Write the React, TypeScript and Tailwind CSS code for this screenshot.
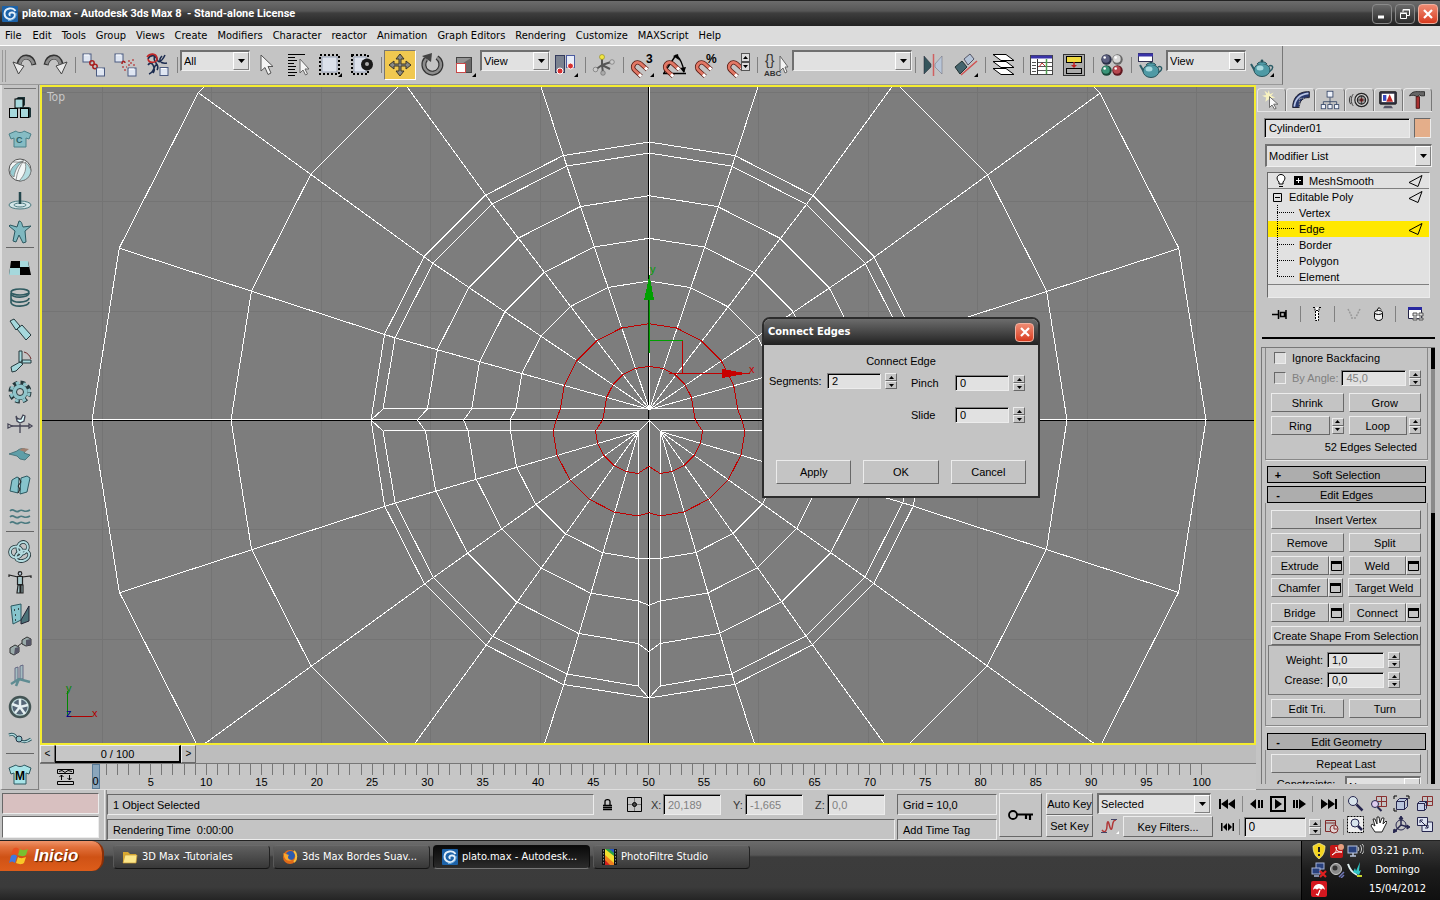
import React from "react";

const PANEL = "[font-family:'Liberation_Sans',Arial,sans-serif]";
const UI = "[font-family:'DejaVu_Sans_Condensed','DejaVu_Sans',Tahoma,sans-serif]";
const TITLE = "[font-family:Roboto,'DejaVu_Sans_Condensed',Tahoma,sans-serif]";
const RAISED =
  "border border-t-[#ececec] border-l-[#ececec] border-b-[#686868] border-r-[#686868]";
const SUNKEN =
  "border border-t-[#686868] border-l-[#686868] border-b-[#ececec] border-r-[#ececec]";
const FIELD =
  "border border-t-[#808080] border-l-[#808080] border-b-[#ececec] border-r-[#ececec] shadow-[inset_1px_1px_0_#000] bg-[#e1e1e1] pl-1 outline-none";

type Kids = { children?: React.ReactNode };

function Ic({ children, s = 24 }: Kids & { s?: number }) {
  return (
    <svg width={s} height={s} viewBox="0 0 24 24" fill="none" aria-hidden="true" className="shrink-0 overflow-visible">
      {children}
    </svg>
  );
}

function Combo({ label, value, cls }: { label: string; value: string; cls: string }) {
  return (
    <div
      className={`relative shrink-0 border-t-2 border-l-2 border-t-[#707070] border-l-[#707070] border-b border-r border-b-[#f0f0f0] border-r-[#f0f0f0] bg-[#e1e1e1] ${cls}`}
    >
      <select aria-label={label} className="block h-full w-full appearance-none bg-transparent pl-0.5 text-[11px] outline-none">
        <option>{value}</option>
      </select>
      <span className="pointer-events-none absolute top-0 right-0 bottom-0 flex w-4 items-center justify-center border border-t-white border-l-white border-b-[#808080] border-r-[#808080] bg-[#dcdcdc]">
        <svg width="7" height="4" viewBox="0 0 7 4"><path d="M0 0h7L3.5 4z" fill="#000" /></svg>
      </span>
    </div>
  );
}

function Spinner({ name }: { name: string }) {
  return (
    <span className="flex h-4 w-3 shrink-0 flex-col">
      <button aria-label={`${name} up`} className={`flex h-2 items-center justify-center ${RAISED}`}>
        <svg width="5" height="3" viewBox="0 0 5 3"><path d="M0 3h5L2.5 0z" fill="#000" /></svg>
      </button>
      <button aria-label={`${name} down`} className={`flex h-2 items-center justify-center ${RAISED}`}>
        <svg width="5" height="3" viewBox="0 0 5 3"><path d="M0 0h5L2.5 3z" fill="#000" /></svg>
      </button>
    </span>
  );
}

function Push({ children, cls = "" }: Kids & { cls?: string }) {
  return (
    <button className={`flex items-center justify-center whitespace-nowrap ${RAISED} ${cls}`}>{children}</button>
  );
}

/* ---------- main toolbar ---------- */

const Cube = ({ x, y, s = 8 }: { x: number; y: number; s?: number }) => (
  <g>
    <rect x={x} y={y} width={s} height={s} fill="#dfe6f2" stroke="#4a5a80" />
    <path d={`M${x + 1} ${y + 1}h${s - 3}`} stroke="#fff" />
  </g>
);
const Corner = () => <path d="M24 20v4h-4z" fill="#000" />;
const Magnet = () => (
  <g transform="rotate(-48 8 15)">
    <path d="M4 23V14a4.500 4.500 0 0 1 9 0v9" stroke="#5a1c14" strokeWidth="4.400" />
    <path d="M4 22V14a4.500 4.500 0 0 1 9 0v8" stroke="#e27866" strokeWidth="2.800" />
    <path d="M4 23v-3M13 23v-3" stroke="#fff" strokeWidth="3" />
  </g>
);
const Pointer = () => (
  <path d="M7 2v16l4-3.500 3 7 3-1.500-3-6.500h5z" fill="#f4f4f4" stroke="#555" />
);
const Teapot = ({ y = 0 }: { y?: number }) => (
  <g transform={`translate(0 ${y})`}>
    <path d="M5 17L1 10" stroke="#2b5c66" strokeWidth="2" />
    <path d="M19 12c5-2 5 4-1 6" stroke="#2b5c66" strokeWidth="1.500" />
    <ellipse cx="12" cy="16" rx="8" ry="6.500" fill="#4f9aa5" stroke="#27525a" />
    <ellipse cx="10" cy="14" rx="3.500" ry="2.500" fill="#a8d8dd" />
    <path d="M7 10c2-3 8-3 10 0" fill="#4f9aa5" stroke="#27525a" />
    <circle cx="12" cy="7" r="1.400" fill="#27525a" />
  </g>
);
const Ball = ({ x, y, c, d }: { x: number; y: number; c: string; d: string }) => (
  <g>
    <circle cx={x} cy={y} r="5.200" fill={d} />
    <circle cx={x - 0.6} cy={y - 0.6} r="3.800" fill={c} />
    <circle cx={x - 1.8} cy={y - 2} r="1.300" fill="#fff" />
  </g>
);

const T: Record<string, React.ReactNode> = {
  Undo: (<><path d="M22 12C20 2 9 1 7 11" stroke="#333" strokeWidth="5" /><path d="M21.500 11C19 3 10 2 7.500 11" stroke="#8d8d8d" strokeWidth="3" /><path d="M1 9l11 4-5.500 8z" fill="#e8e8e8" stroke="#444" /></>),
  Redo: (<><path d="M2 12C4 2 15 1 17 11" stroke="#333" strokeWidth="5" /><path d="M2.500 11C5 3 14 2 16.500 11" stroke="#8d8d8d" strokeWidth="3" /><path d="M23 9l-11 4 5.500 8z" fill="#e8e8e8" stroke="#444" /></>),
  Link: (<><Cube x={1} y={1} /><circle cx="10" cy="10" r="2.200" stroke="#a82020" strokeWidth="1.500" /><circle cx="13" cy="13.500" r="2.200" stroke="#a82020" strokeWidth="1.500" /><Cube x={14.5} y={15} /></>),
  Unlink: (<><Cube x={1} y={1} /><path d="M8 11c0-4 3-3 3-1" stroke="#a82020" strokeWidth="1.500" /><path d="M14 8h2M18 7h2M16 10h2M8 14h2M10 17h2M12 14h1M14 12h2M19 12h2" stroke="#b85050" strokeWidth="1.300" /><Cube x={14} y={15} /></>),
  Bind: (<><path d="M2 6c2-5 8-4 9 0s4 4 8-4M2 12c4-6 8 4 5 8M9 3c-4 6 6 8 2 14M16 3c-4 4-2 8 5 7M3 21c6-2 4-8 8-10" stroke="#1c2c50" strokeWidth="1.600" /><path d="M1 4c3-4 9-4 10 1s-8 6-9 1" stroke="#c02828" strokeWidth="1.600" /><Cube x={14} y={14.5} /></>),
  Select: <Pointer />,
  "Select by Name": (<><path d="M2 1.500h17M2 4.500h7M2 7.500h9M2 10.500h6M2 13.500h8M2 16.500h7M2 19.500h9M2 22.500h7" stroke="#000" /><path d="M14 6v14l3-3 2.500 5 2-1-2.500-5h4z" fill="#f4f4f4" stroke="#666" /></>),
  Region: (<><rect x="2" y="2" width="19" height="19" stroke="#000" strokeWidth="2" strokeDasharray="2 2" /><rect x="4" y="4" width="15" height="15" fill="#dbe0ea" stroke="#9aa3b8" /><Corner /></>),
  Crossing: (<><rect x="2" y="2" width="16" height="19" stroke="#000" strokeWidth="2" strokeDasharray="2 2" /><rect x="4" y="4" width="12" height="15" fill="#dbe0ea" stroke="#9aa3b8" /><circle cx="17" cy="11.500" r="6" fill="#1a1a1a" /><circle cx="17" cy="11" r="2" fill="#aaa" /></>),
  Move: (<path d="M12 1l4 5h-3v5h5V8l5 4-5 4v-3h-5v5h3l-4 5-4-5h3v-5H6v3l-5-4 5-4v3h5V6H8z" fill="#8a8a86" stroke="#3a3426" />),
  Rotate: (<><path d="M17 4.500A8.500 8.500 0 1 1 6 6" stroke="#333" strokeWidth="5" /><path d="M17 4.500A8.500 8.500 0 1 1 6 6" stroke="#8d8d8d" strokeWidth="2.600" /><path d="M2 3l10-3-1 9z" fill="#444" /></>),
  Scale: (<><rect x="4.500" y="4.500" width="15" height="15" fill="#6a6a6a" stroke="#444" /><path d="M5 5h14L5 14z" fill="#949494" /><rect x="4.500" y="10.500" width="9" height="9" fill="#fff" stroke="#c84848" /><Corner /></>),
  Pivot: (<><rect x="1.500" y="2.500" width="9" height="17" fill="#7b8290" stroke="#333a5c" /><rect x="12.500" y="2.500" width="8" height="12" fill="#e8edf8" stroke="#4a5aa0" /><circle cx="6" cy="18" r="3" fill="#d83030" stroke="#fff" /><circle cx="16.500" cy="13" r="3" fill="#d83030" stroke="#fff" /><Corner /></>),
  Manipulate: (<><path d="M10 12V4M10 12L3 17M10 12l9-3M10 12l1 8M10 12l8 4" stroke="#555" strokeWidth="2" /><circle cx="10" cy="4" r="2.500" fill="#f2e640" stroke="#8a8420" strokeWidth=".6" /><circle cx="3.500" cy="16.500" r="2.300" fill="#ccc" stroke="#666" strokeWidth=".6" /><circle cx="20" cy="9" r="2.300" fill="#ccc" stroke="#666" strokeWidth=".6" /><circle cx="11" cy="20" r="2.300" fill="#aaa" stroke="#666" strokeWidth=".6" /></>),
  "Snap 3": (<><Magnet /><text x="16" y="10" fontSize="12" fontWeight="700" fill="#000">3</text><Corner /></>),
  "Angle Snap": (<><path d="M1 20.500h23M2 20L14 2M14 2c5 4 7 10 8 17" stroke="#000" strokeWidth="1.400" /><path d="M11 3l5-2 1 6z" fill="#000" /><path d="M18 15l6-1-2 6z" fill="#000" /><Magnet /></>),
  "Percent Snap": (<><Magnet /><text x="12" y="10" fontSize="12" fontWeight="700" fill="#000">%</text></>),
  "Spinner Snap": (<><Magnet /><rect x="15.500" y=".5" width="8" height="8" fill="#ddd" stroke="#555" /><rect x="15.500" y="9.500" width="8" height="8" fill="#ddd" stroke="#555" /><path d="M17 6h5l-2.500-3zM17 12h5l-2.500 3z" fill="#000" /></>),
  "Named Sets": (<><text x="1" y="12" fontSize="14" fill="#333">{"{}"}</text><text x="0" y="23" fontSize="8" fontWeight="700" fill="#333">ABC</text><path d="M16 3v15l3-3 2 5 2-1-2-5h3z" fill="#f4f4f4" stroke="#666" /></>),
  Mirror: (<><path d="M2 3l7 8v3L2 21z" fill="#35555c" stroke="#223" strokeWidth=".5" /><path d="M20 3l-7 8v3l7 7z" fill="#b9c6d8" stroke="#667" strokeWidth=".5" /><path d="M11.500 1v22" stroke="#d06060" strokeWidth="1.500" /></>),
  Align: (<><path d="M1 14l7-6 5 6-7 7z" fill="#45656e" stroke="#233" /><path d="M10 6l6-5 4 5-6 6z" fill="#b5c4d8" stroke="#556" /><path d="M7 22L23 8" stroke="#d05050" strokeWidth="1.500" /><Corner /></>),
  Layers: (<><path d="M1 15.500h13l8 6H9zM1 8.500h13l8 6H9zM1 1.500h13l8 6H9z" fill="#fff" stroke="#000" /></>),
  "Curve Editor": (<><rect x=".5" y="2.500" width="22" height="19" fill="#fff" stroke="#444" /><path d="M1 4h21" stroke="#3a34a8" strokeWidth="3" /><path d="M2 9.500h4M2 12.500h4M2 15.500h4M2 18.500h4M8 9.500h14M8 13.500h14M8 17.500h14" stroke="#555" /><path d="M7.500 6v15" stroke="#333" /><path d="M9 14l3-4 3 3" stroke="#c03030" /><path d="M16.500 6v15" stroke="#50a050" strokeWidth="1.500" /></>),
  Schematic: (<><rect x="1.500" y="1.500" width="21" height="21" fill="#aaa" stroke="#333" /><rect x="4.500" y="3.500" width="15" height="6" fill="#f0da40" stroke="#000" /><rect x="4.500" y="15.500" width="15" height="5" fill="#aaa" stroke="#000" /><path d="M12 9v3" stroke="#c02020" strokeWidth="1.500" /><path d="M9 12h6l-3 3z" fill="#c02020" /></>),
  Materials: (<><Ball x={6.5} y={6.5} c="#5c6080" d="#2c3048" /><Ball x={17.5} y={6.5} c="#d8d8d8" d="#666" /><Ball x={6.5} y={17.5} c="#3a9478" d="#184838" /><Ball x={17.5} y={17.5} c="#b84850" d="#601820" /></>),
  "Render Scene": (<><g transform="translate(1 2)"><Teapot /></g><rect x=".5" y=".5" width="14" height="8" fill="#fff" stroke="#335" /><path d="M0 2h15" stroke="#3a34a8" strokeWidth="3" /></>),
  "Quick Render": (<><Teapot y={1} /><Corner /></>),
};

function Tool({ name, on = false }: { name: string; on?: boolean }) {
  return (
    <button
      aria-label={name}
      className={`flex h-[30px] w-8 shrink-0 items-center justify-center ${
        on ? "border border-t-[#777] border-l-[#777] border-b-white border-r-white bg-[#f0c850]" : ""
      }`}
    >
      <Ic>{T[name]}</Ic>
    </button>
  );
}
const Sep = () => (
  <span className="flex h-[30px] w-1.5 shrink-0 items-center justify-center">
    <span className="h-4 w-px bg-[#808080]" />
  </span>
);

/* ---------- reactor toolbar ---------- */

const R1 = "#a6d8dc";
const R2 = "#24383c";
const REACTOR: [string, React.ReactNode][][] = [
  [
    ["Rigid Bodies", <><path d="M7 4l3-3h7v8l-3 3H7z" fill="#1c3438" /><rect x="7" y="3" width="8" height="9" fill={R1} stroke="#000" /><path d="M12 20V11h9l2 1v9l-2 1z" fill="#1c3438" /><rect x="1.500" y="12.500" width="8" height="9" fill={R1} stroke="#000" /><rect x="12.500" y="12.500" width="8" height="9" fill={R1} stroke="#000" /></>],
    ["Cloth", <><path d="M8 4L1 7l2 5 3-1v9h12v-9l3 1 2-5-7-3c-2 2-6 2-8 0z" fill="#86bcc4" stroke="#4a8088" /><text x="8" y="16" fontSize="9" fontWeight="700" fill="#2c6068">C</text></>],
    ["Soft Body", <><circle cx="12" cy="12" r="11" fill="#f2f6f6" stroke="#555" /><path d="M2 15C3 9 9 4 15 3c-5 4-8 9-9 16-2-1-3-2-4-4z" fill="#98ccd2" stroke="#777" strokeWidth=".8" /><path d="M17 4c2 6 0 13-6 19 7 0 11-4 12-10-1-4-3-7-6-9z" fill="#b4dce0" stroke="#777" strokeWidth=".8" /><path d="M5 4c4 0 8 0 12 1M16 2c-4 6-7 12-8 20" stroke="#777" strokeWidth=".8" /></>],
    ["Rope", <><ellipse cx="12" cy="16" rx="11" ry="4" fill="#d4e6e8" stroke="#4b7a80" /><ellipse cx="12" cy="16" rx="6" ry="2" stroke="#4b7a80" /><path d="M12 3v12" stroke="#23464c" strokeWidth="2.500" /></>],
    ["Deforming Mesh", <path d="M11 1c3 0 3 4 4 6l8-1-6 5 1 11-3 1-4-8-3 7-3-1 2-10-6-5 1-1 7 2z" fill="#7fb8c0" stroke="#2c5860" />],
  ],
  [
    ["Plane", <><path d="M3 5h17l3 14H1z" fill="#000" /><path d="M12 5h8l1 6h-9zM2 12h10v7H1z" fill={R1} /></>],
    ["Spring", <g stroke="#2f5a60" strokeWidth="1.600"><ellipse cx="12" cy="5" rx="9" ry="3" /><path d="M3 6c0 6 18 5 18 0M3 11c0 6 18 5 18 0M3 15c0 6 18 5 18 0M3 7v9" /></g>],
    ["Linear Dashpot", <g stroke={R2}><path d="M2 3l4-2 6 7-4 4z" fill={R1} /><path d="M9 11l5-4 9 10-5 5z" fill={R1} /></g>],
    ["Angular Dashpot", <g stroke={R2}><path d="M12 13l-9 5 1 5 4-1 7-7z" fill={R1} /><path d="M11 2h3v11h-3zM14 11h9v3h-9z" fill={R1} /><path d="M16 3c4 1 6 4 7 7" stroke="#6a2828" /></g>],
    ["Motor", <><circle cx="12" cy="12" r="9.500" stroke={R2} strokeWidth="4" strokeDasharray="4.500 3" /><circle cx="12" cy="12" r="8" fill={R2} /><circle cx="12" cy="12" r="9" stroke="#8fc4ca" strokeWidth="3" strokeDasharray="3.500 4" strokeDashoffset="-.5" /><circle cx="12" cy="12" r="7.500" fill="#8fc4ca" /><circle cx="12" cy="12" r="3.500" fill="#c5c5c5" stroke={R2} /></>],
    ["Wind", <g stroke="#445" strokeWidth="1.300"><path d="M12 22v-9M1 15h22" /><path d="M21 13l3 2-3 2zM0 13l4 2-4 2z" fill="#eee" /><path d="M8 5c1 4 3 3 5 3l2-4 2 1-1 5-4 2-3-2z" fill="#dff" /></g>],
    ["Toy Car", <><path d="M1 12l8-3c3-3 7-3 9-1l-2 3 6 2-5 5-5-1-3-3z" fill="#5f9ea8" stroke="#3c6870" strokeWidth=".8" /><path d="M11 8l4-2 6 1-4 3z" fill="#a08070" /></>],
    ["Fracture", <><path d="M4 7l5-3 2 1-1 15-8-2zM13 5l6-2 3 2-3 14-7 2z" fill="#86c4cc" stroke="#2c5860" /><path d="M11 5l2 4-3 4 2 3-2 4" stroke="#222" /></>],
    ["Water", <g stroke="#4b7a80" strokeWidth="1.600"><path d="M2 7c4-4 5 3 9 0s5 3 11-1M2 13c4-4 5 3 9 0s5 3 11-1M2 19c4-4 5 3 9 0s5 3 11-1" /></g>],
  ],
  [
    ["Constraint Solver", <><g stroke={R2} strokeWidth="3.600"><ellipse cx="14.500" cy="7.500" rx="5" ry="6" transform="rotate(25 14 8)" /><ellipse cx="8" cy="12" rx="6" ry="5.500" /><ellipse cx="14.500" cy="16" rx="7" ry="5" transform="rotate(-20 14 16)" /></g><g stroke="#b4dce0" strokeWidth="2"><ellipse cx="14.500" cy="7.500" rx="5" ry="6" transform="rotate(25 14 8)" /><ellipse cx="8" cy="12" rx="6" ry="5.500" /><ellipse cx="14.500" cy="16" rx="7" ry="5" transform="rotate(-20 14 16)" /></g></>],
    ["Rag Doll", <g stroke="#222" strokeWidth="1.200"><circle cx="12" cy="2.500" r="1.800" fill="#bcd" /><path d="M9.500 5.500h5v8h-5z" fill="#a8c8cc" /><path d="M10 6L1 4v2M14 6l9-1v2" /><path d="M10 14h2v8h-3zM13 14h2v8h-2z" fill="#a8c8cc" /></g>],
    ["Hinge", <><path d="M3 4l10-2v16l-8 4z" fill="#86c4cc" stroke="#2c5860" /><path d="M13 18l8-14v15l-8 3z" fill="#4c7278" stroke="#223" /><path d="M6 8h1M10 7h1M7 13h1M7 18h1" stroke="#222" strokeWidth="1.500" /></>],
    ["Point to Point", <><path d="M2 15l5-3 4 2v5l-5 3-4-2zM14 7l5-3 4 2v6l-5 1-4-2z" fill="#9aa" stroke="#333" /><path d="M7 15l4-1v5l-5 3zM18 7l5-1v6l-5 1z" fill="#556" /><path d="M10 13l4-3" stroke="#333" /></>],
    ["Prismatic", <><path d="M7 4l3-1v14H7zM12 2l3-1v14h-3z" fill="#a4bcc0" stroke="#557" strokeWidth=".8" /><path d="M3 20l8-5 11 3M11 15l-3 7" stroke="#5f8c92" strokeWidth="2.500" /></>],
    ["Wheel", <><circle cx="12" cy="12" r="10" fill="#b8d4d6" stroke="#455" strokeWidth="2.500" /><circle cx="12" cy="12" r="7.500" fill="#567" /><path d="M12 12V4M12 12l8-2M12 12l5 7M12 12l-5 6M12 12L4 9" stroke="#e4eef0" strokeWidth="2.500" /></>],
    ["Point Path", <><path d="M1 9c5-2 6 1 9 4s8 4 13 0" stroke="#2c5860" strokeWidth="3" /><path d="M1 9c5-2 6 1 9 4s8 4 13 0" stroke="#b4dce0" strokeWidth="1.300" /><circle cx="11" cy="13" r="3" fill="#8fc4ca" stroke="#234" /></>],
  ],
  [["Cloth Modifier", <><path d="M8 3L1 6l2 6 3-1v11h12V11l3 1 2-6-7-3c-2 2-6 2-8 0z" fill="#a8e4e8" stroke="#2c5860" /><text x="7" y="18" fontSize="12" fontWeight="700" fill="#000">M</text></>]],
];

function ReactorBar() {
  return (
    <aside className="flex w-[39px] shrink-0 flex-col items-center border-l-2 border-l-[#e0e0e0] border-r border-r-[#808080] border-b border-b-[#808080]">
      <div className="flex h-[7px] w-8 items-center"><span className="h-px w-full bg-[#777]" /></div>
      {REACTOR.map((g, i) => (
        <div key={i} className="flex flex-col items-center">
          {i > 0 && <span className="flex h-[5px] w-7 items-start"><span className="h-px w-full bg-[#666]" /></span>}
          {g.map(([n, d]) => (
            <button key={n} aria-label={n} className="flex h-[31px] w-8 items-center justify-center">
              <Ic>{d}</Ic>
            </button>
          ))}
        </div>
      ))}
    </aside>
  );
}

/* ---------- viewport mesh ---------- */

type P = [number, number];
const CX = 649;
const CY = 420;
const polar = (r: number, k: number): P => [
  CX + r * Math.cos((k * Math.PI) / 10),
  CY - r * Math.sin((k * Math.PI) / 10),
];
const lerp = (a: P, b: P, t: number): P => [a[0] + (b[0] - a[0]) * t, a[1] + (b[1] - a[1]) * t];
const pts = (l: P[]) => l.map((p) => `${p[0].toFixed(1)},${p[1].toFixed(1)}`).join(" ");
const full = (r: number) => pts(Array.from({ length: 21 }, (_, k) => polar(r, k)));

const TOP: P = [649, 409];
const LEFT: P = [638, 431];
const RIGHT: P = [660, 431];
const CENTER: P = [CX, CY];
const range = (a: number, b: number) => Array.from({ length: b - a + 1 }, (_, i) => a + i);

const innerRing = (t: number) => {
  const up = [[915, 409] as P, ...range(1, 9).map((k) => polar(267, k)), [383, 409] as P].map((p) => lerp(TOP, p, t));
  const lo = [[383, 431] as P, ...range(11, 14).map((k) => polar(267, k)), [638, 686] as P].map((p) => lerp(LEFT, p, t));
  const ro = [[660, 686] as P, ...range(16, 19).map((k) => polar(267, k)), [915, 431] as P].map((p) => lerp(RIGHT, p, t));
  const l = lerp(CENTER, [371, CY], t);
  const b = lerp(CENTER, [CX, 698], t);
  const r = lerp(CENTER, [927, CY], t);
  return pts([...up, l, ...lo, b, ...ro, r, up[0]]);
};

function Viewport() {
  const spokes: [P, P][] = [];
  for (let k = 0; k < 20; k++) {
    if (k % 10 === 0 || k === 15) continue;
    const apex = k < 10 ? TOP : k < 15 ? LEFT : RIGHT;
    spokes.push([apex, polar(267, k)], [polar(267, k), polar(557, k)]);
  }
  const straight: [P, P][] = [
    [[383, 408], [915, 408]], [[383, 430], [638, 430]], [[660, 430], [915, 430]],
    [[638, 431], [638, 686]], [[660, 431], [660, 686]],
    [[638, 431], [649, 420]], [[660, 431], [649, 420]],
    [[92, 419], [1206, 419]], [[649, 420], [649, 745]],
  ];
  return (
    <svg
      className="block h-full w-full"
      viewBox="42 87 1212 656"
      preserveAspectRatio="xMidYMid slice"
      shapeRendering="crispEdges"
      fill="none"
      role="img"
      aria-label="Top viewport"
    >
      <rect x="0" y="0" width="1440" height="900" fill="#7d7d7d" />
      <g stroke="#747474">
        {range(-5, 5).map((i) => (<path key={i} d={`M${Math.round(CX + i * 109.4)}.5 80V750`} />))}
        {range(-3, 2).map((i) => (<path key={i} d={`M40 ${Math.round(CY + i * 109.4)}.5H1260`} />))}
      </g>
      <path d="M40 420.500H1260M648.500 80V750" stroke="#000" />
      <g stroke="#fff">
        {[...spokes, ...straight].map(([a, b], i) => (
          <line key={i} x1={a[0] + 0.5} y1={a[1] + 0.5} x2={b[0] + 0.5} y2={b[1] + 0.5} />
        ))}
        {[278, 418, 557].map((r) => (<polyline key={r} points={full(r)} />))}
        {[1, 5 / 6, 4 / 6, 3 / 6].map((t) => (<polyline key={t} points={innerRing(t)} />))}
      </g>
      <g stroke="#c00000">
        <polyline points={innerRing(2 / 6)} />
        <polyline points={innerRing(1 / 6)} />
        <path d="M669 373.500H724M682.500 341V373M744 373.500H750" />
      </g>
      <path d="M722 369v9l26-4.500z" fill="#c80000" />
      <path d="M649.500 276V353M649 340.500H683" stroke="#00a000" />
      <path d="M648.500 280V353" stroke="#063c06" />
      <path d="M644 300h10l-4.500-25z" fill="#00a000" />
      <path d="M67.500 691V716" stroke="#008800" />
      <path d="M68 716.500H92" stroke="#b00000" />
      <g fontSize="11" fontFamily="Liberation Sans, sans-serif" shapeRendering="auto">
        <text x="47" y="101" fill="#c8c8c8" fontSize="12" fontFamily="DejaVu Sans Condensed, sans-serif">Top</text>
        <text x="650" y="273" fill="#00a000">y</text>
        <text x="749" y="373" fill="#c80000">x</text>
        <text x="66" y="692" fill="#008800">y</text>
        <text x="92" y="717" fill="#b00000">x</text>
        <text x="66" y="717" fill="#000090">z</text>
      </g>
    </svg>
  );
}

/* ---------- dialog ---------- */

const CloseX = () => (
  <svg width="12" height="12" viewBox="0 0 12 12"><path d="M2 2l8 8M10 2l-8 8" stroke="#fff" strokeWidth="2.200" /></svg>
);

function NumField({ label, value, w }: { label: string; value: string; w: string }) {
  return <input aria-label={label} defaultValue={value} className={`h-4 text-[11px] ${w} ${FIELD}`} />;
}

function ConnectDialog() {
  return (
    <section
      role="dialog"
      aria-label="Connect Edges"
      className="absolute top-[230px] left-[720px] flex h-[181px] w-[278px] flex-col rounded-t-lg border-2 border-[#2c2c2c] bg-[#c4c4c4]"
    >
      <header className={`flex h-[26px] items-center justify-between rounded-t-md bg-linear-to-b from-[#6c6c6c] via-[#474747] to-[#222] pr-1 pl-1 ${UI}`}>
        <h2 className="text-[11px] font-bold text-white">Connect Edges</h2>
        <button aria-label="Close" className="flex h-[19px] w-[19px] items-center justify-center rounded-sm border border-[#f0b0a0] bg-linear-to-b from-[#ee8a72] to-[#d8391c]">
          <CloseX />
        </button>
      </header>
      <div className="flex grow flex-col px-[5px]">
        <p className="mt-2 text-center leading-4">Connect Edge</p>
        <div className="flex justify-between">
          <div className="flex h-6 items-center gap-1">
            <label className="w-[54px]">Segments:</label>
            <NumField label="Segments" value="2" w="w-[54px]" />
            <Spinner name="Segments" />
          </div>
          <div className="mt-0.5 mr-2 flex flex-col gap-2">
            {["Pinch", "Slide"].map((n) => (
              <div key={n} className="flex h-6 items-center gap-1">
                <label className="w-10">{n}</label>
                <NumField label={n} value="0" w="w-[54px]" />
                <Spinner name={n} />
              </div>
            ))}
          </div>
        </div>
        <div className="mt-auto mb-3 flex gap-3 px-[7px]">
          {["Apply", "OK", "Cancel"].map((b) => (<Push key={b} cls="h-6 flex-1">{b}</Push>))}
        </div>
      </div>
    </section>
  );
}

/* ---------- time controls ---------- */

function TimeSlider() {
  return (
    <div className="flex h-[19px] items-stretch border-b border-b-[#777] bg-[#bdbdbd]">
      <button aria-label="Previous frame step" className={`w-[15px] text-[10px] ${RAISED}`}>&lt;</button>
      <button className="w-[126px] border border-t-[#ececec] border-l-black border-r-2 border-b-2 border-r-black border-b-black bg-[#c6c6c6]">0 / 100</button>
      <button aria-label="Next frame step" className={`w-[15px] text-[10px] ${RAISED}`}>&gt;</button>
    </div>
  );
}

function TrackBar() {
  return (
    <div className="relative flex h-[26px] border-b border-b-[#dedede] bg-[#c6c6c6]">
      <button aria-label="Open mini curve editor" className="flex w-[50px] shrink-0 items-center justify-center">
        <svg width="17" height="16" viewBox="0 0 17 16" fill="none" stroke="#000">
          <path d="M.5.5h16v4H.5zM.5 12.500h16v3H.5zM2 2.500l3-1 3 2 3-2 4 1M4.500 11V6M12.500 6v5M2.500 8l2-2 2 2M10.500 9l2 2 2-2" />
        </svg>
      </button>
      <div className="mr-[49px] flex grow">
        {range(0, 100).map((f) => (
          <div key={f} className="flex min-w-0 flex-1 flex-col items-center">
            {f === 0 ? (
              <span className="flex h-[25px] w-2 items-end justify-center border border-[#5a7c98] bg-[#8aa6bc]">0</span>
            ) : (
              <>
                <span className="h-[11px] w-px shrink-0 bg-[#777]" />
                {f % 5 === 0 && <span className="leading-[14px]">{f}</span>}
              </>
            )}
          </div>
        ))}
      </div>
    </div>
  );
}

/* ---------- command panel ---------- */

const TABS: [string, React.ReactNode][] = [
  ["Create", <><path d="M8 0l1.500 5L14 3l-3 4 5 2-5 1 1 5-4-4-4 3 1-5-5-2 5-1-2-5 4 3z" fill="#f8f2c0" /><path d="M9 8v13l3-3 3 5 2-1-3-5h5z" fill="#fafafa" stroke="#555" /></>],
  ["Modify", <><path d="M2 21C2 9 9 2 20 2h2v7c-8 0-12 4-12 12z" fill="#28386c" stroke="#112" /><path d="M4 20C5 10 11 5 21 4" stroke="#b8c4e4" strokeWidth="2" /><path d="M10 21V10h12" stroke="#aaa" strokeDasharray="2 1" /></>],
  ["Hierarchy", <g stroke="#334466"><rect x="8.500" y="1.500" width="7" height="7" fill="#eef2fa" /><path d="M12 9v5M4 18v-4h16v4M12 14v4" /><rect x="1.500" y="17.500" width="5" height="5" fill="#eef2fa" /><rect x="9.500" y="17.500" width="5" height="5" fill="#eef2fa" /><rect x="17.500" y="17.500" width="5" height="5" fill="#eef2fa" /></g>],
  ["Motion", <g stroke="#222" strokeWidth="1.400"><circle cx="15" cy="12" r="8" fill="#d4d4d4" /><circle cx="15" cy="12" r="5" fill="#999" /><circle cx="15" cy="12" r="1.500" fill="#a22" stroke="#a22" /><path d="M10 12h10M15 7v10" strokeWidth=".8" /><path d="M5 5c-3 4-3 10 0 14M2 7c-2 3-2 7 0 10" strokeWidth="1" /></g>],
  ["Display", <><rect x="2" y="2" width="20" height="15" rx="1" fill="#334" stroke="#111" /><rect x="4.500" y="4.500" width="15" height="10" fill="#fff" /><path d="M6 6h4v7H6z" fill="#3848c0" /><path d="M14 5l4 9h-8z" fill="#c02828" /><path d="M8 19h8l2 3H6z" fill="#556" /></>],
  ["Utilities", <><path d="M3 7c3-6 8-5 13-5h5v5h-4l-2-1-3 2c-3-2-6-2-9-1z" fill="#666" stroke="#222" /><path d="M11 8h4v14h-4z" fill="#a83030" stroke="#401010" /></>],
];

const Flag = () => (
  <svg width="15" height="12" viewBox="0 0 15 12" fill="none" className="ml-auto"><path d="M1 7.500L14 .5l-4 11z" stroke="#000" /></svg>
);

function StackList() {
  return (
    <div className={`mx-2.5 mt-[5px] flex h-[126px] flex-col bg-[#e1e1e1] ${SUNKEN}`}>
      <div className="flex h-4 items-center border-b border-b-[#808080] pr-1.5 pl-2">
        <svg width="10" height="13" viewBox="0 0 10 13" fill="#fff" stroke="#000"><path d="M3 8C-1 4 2 .5 5 .5S11 4 7 8v2H3z" /><path d="M3 12.500h4" /></svg>
        <svg width="9" height="9" viewBox="0 0 9 9" className="ml-2"><path d="M0 0h9v9H0z" /><path d="M2 4.500h5M4.500 2v5" stroke="#fff" /></svg>
        <span className="ml-1.5">MeshSmooth</span>
        <Flag />
      </div>
      <div className="flex h-4 items-center pr-1.5 pl-[5px]">
        <svg width="9" height="9" viewBox="0 0 9 9" fill="none" stroke="#000"><path d="M.5.5h8v8h-8zM2 4.500h5" /></svg>
        <span className="ml-[7px]">Editable Poly</span>
        <Flag />
      </div>
      {["Vertex", "Edge", "Border", "Polygon", "Element"].map((n) => (
        <div key={n} className={`flex h-4 items-center pr-1.5 pl-[9px] ${n === "Edge" ? "bg-[#ffe800]" : ""} ${n === "Element" ? "border-b border-b-[#808080]" : ""}`}>
          <svg width="18" height="16" viewBox="0 0 18 16" fill="none" stroke="#000" strokeDasharray="1 1">
            <path d={n === "Element" ? "M.5 0v8M0 7.500h17" : "M.5 0v16M0 7.500h17"} />
          </svg>
          <span className="ml-1">{n}</span>
          {n === "Edge" && <Flag />}
        </div>
      ))}
    </div>
  );
}

function StackTools() {
  const bar = <span className="h-4 w-px bg-[#808080]" />;
  return (
    <div className="mr-4 ml-[15px] flex h-8 items-center justify-between">
      <button aria-label="Pin stack"><svg width="16" height="10" viewBox="0 0 16 10" stroke="#000" fill="none"><path d="M0 5.500h6M6.500 1v9M8.500 3.500h4v4h-4zM14 1v9" strokeWidth="1.500" /></svg></button>
      {bar}
      <button aria-label="Show end result"><svg width="10" height="14" viewBox="0 0 10 14" fill="#fff" stroke="#000"><path d="M1 .5h2v3h4v-3h2M3.500 4v9.500h3V4" strokeDasharray="2 1" /></svg></button>
      {bar}
      <button aria-label="Make unique"><svg width="14" height="12" viewBox="0 0 14 12" fill="none" stroke="#999" strokeWidth="1.500"><path d="M1 1l4 8M13 1L9 9M4 10h6" strokeDasharray="2 1" /></svg></button>
      <button aria-label="Remove modifier"><svg width="11" height="14" viewBox="0 0 11 14" fill="#eee" stroke="#000"><path d="M1.500 5.500v5c0 4 8 4 8 0v-5" /><ellipse cx="5.500" cy="5.500" rx="4" ry="2" /><path d="M4 3l2-2.500 2 2" /></svg></button>
      {bar}
      <button aria-label="Configure sets"><svg width="16" height="14" viewBox="0 0 16 14"><path d="M.5.5h13v11H.5z" fill="#fff" stroke="#224" /><path d="M0 1.500h14" stroke="#2828a0" strokeWidth="3" /><path d="M5 6h4v3H5zM5 11h4v2H5zM11 6h4v3h-4zM11 11h4v2h-4z" fill="#ddd" stroke="#555" /></svg></button>
    </div>
  );
}

const SetBtn = ({ name }: { name: string }) => (
  <button aria-label={`${name} settings`} className={`flex w-[15px] shrink-0 items-center justify-center ${RAISED}`}>
    <svg width="11" height="10" viewBox="0 0 11 10" fill="none"><path d="M.5.5h10v9H.5z" stroke="#000" /><path d="M0 1.500h11" stroke="#000" strokeWidth="3" /></svg>
  </button>
);

const Head = ({ sign, children }: Kids & { sign: string }) => (
  <button className="mx-[2px] flex h-[17px] shrink-0 items-center border border-black bg-[#adadad] px-1.5">
    <span className="w-2 font-bold">{sign}</span>
    <span className="grow text-center">{children}</span>
    <span className="w-2" />
  </button>
);
const Row = ({ children, cls = "" }: Kids & { cls?: string }) => (
  <div className={`flex h-[19px] shrink-0 gap-[5px] ${cls}`}>{children}</div>
);

function Rollouts() {
  const B = "min-w-0 flex-1";
  const BOX = "flex shrink-0 flex-col border-r border-b border-l border-[#888] pr-1.5 pl-[5px] shadow-[1px_1px_0_#e8e8e8]";
  return (
    <div className="mt-2 mr-[5px] ml-1 flex h-[437px] gap-[3px] overflow-hidden border-t border-t-[#777] border-l border-l-[#777]">
      <div className="flex min-w-0 grow flex-col overflow-hidden pl-[3px]">
        <div className={`h-[112px] ${BOX}`}>
          <label className="mt-[3px] flex h-[14px] items-center gap-1.5 pl-[3px]">
            <input type="checkbox" className={`h-3 w-3 appearance-none bg-[#dcdcdc] ${SUNKEN}`} />
            Ignore Backfacing
          </label>
          <div className="mt-1 flex h-[18px] items-center pl-[3px] text-[#808080]">
            <label className="flex shrink-0 items-center gap-1.5 whitespace-nowrap">
              <input type="checkbox" disabled className={`h-3 w-3 appearance-none bg-[#c6c6c6] ${SUNKEN}`} />
              By Angle:
            </label>
            <input aria-label="Angle" defaultValue="45,0" className={`mx-[3px] h-4 min-w-0 grow text-[11px] ${FIELD}`} />
            <Spinner name="Angle" />
          </div>
          <Row cls="mt-1.5"><Push cls={B}>Shrink</Push><Push cls={B}>Grow</Push></Row>
          <Row cls="mt-1">
            <div className="flex flex-1 items-center gap-[2px]"><Push cls="h-full grow">Ring</Push><Spinner name="Ring" /></div>
            <div className="flex flex-1 items-center gap-[2px]"><Push cls="h-full grow">Loop</Push><Spinner name="Loop" /></div>
          </Row>
          <p className="mt-1 pr-1 text-right leading-4">52 Edges Selected</p>
        </div>
        <div className="mt-1.5 flex flex-col"><Head sign="+">Soft Selection</Head></div>
        <div className="mt-[3px] flex flex-col"><Head sign="-">Edit Edges</Head></div>
        <div className={`h-[223px] ${BOX}`}>
          <Row cls="mt-[7px]"><Push cls={B}>Insert Vertex</Push></Row>
          <Row cls="mt-1"><Push cls={B}>Remove</Push><Push cls={B}>Split</Push></Row>
          <Row cls="mt-1">
            <div className="flex flex-1"><Push cls="grow">Extrude</Push><SetBtn name="Extrude" /></div>
            <div className="flex flex-1"><Push cls="grow">Weld</Push><SetBtn name="Weld" /></div>
          </Row>
          <Row cls="mt-[3px]">
            <div className="flex flex-1"><Push cls="grow">Chamfer</Push><SetBtn name="Chamfer" /></div>
            <Push cls={B}>Target Weld</Push>
          </Row>
          <Row cls="mt-1.5">
            <div className="flex flex-1"><Push cls="grow">Bridge</Push><SetBtn name="Bridge" /></div>
            <div className="flex flex-1"><Push cls="grow">Connect</Push><SetBtn name="Connect" /></div>
          </Row>
          <Row cls="mt-1"><Push cls={B}>Create Shape From Selection</Push></Row>
          <div className="-ml-[3px] flex h-[50px] shrink-0 flex-col justify-center gap-1 border border-[#777] pl-3">
            {[["Weight:", "1,0"], ["Crease:", "0,0"]].map(([n, v]) => (
              <div key={n} className="flex h-4 items-center gap-1">
                <label className="w-[42px] text-right">{n}</label>
                <NumField label={n} value={v} w="w-[57px]" />
                <Spinner name={n} />
              </div>
            ))}
          </div>
          <Row cls="mt-1"><Push cls={B}>Edit Tri.</Push><Push cls={B}>Turn</Push></Row>
        </div>
        <div className="mt-[7px] flex flex-col"><Head sign="-">Edit Geometry</Head></div>
        <div className={BOX}>
          <Row cls="mt-1"><Push cls={B}>Repeat Last</Push></Row>
          <div className="mt-[3px] flex h-5 gap-1">
            <label className="w-[70px] text-center leading-4">Constraints:</label>
            <Combo label="Constraints" value="None" cls="h-5 grow" />
          </div>
        </div>
      </div>
      <div className="w-1 shrink-0 bg-black pt-[21px]"><div className="h-[144px] bg-[#8a8a8a]" /></div>
    </div>
  );
}

function CommandPanel() {
  return (
    <aside className="flex w-[184px] shrink-0 flex-col border-b border-b-[#888] pl-px">
      <div className="mt-[3px] mr-2 flex h-6 border-b border-b-[#e4e4e4]">
        {TABS.map(([n, d]) => (
          <button
            key={n}
            aria-label={n}
            className={`flex flex-1 items-center justify-center rounded-t-sm border-t border-r border-l border-t-[#e8e8e8] border-l-[#e8e8e8] border-r-[#777] ${n === "Modify" ? "bg-[#cdcdcd]" : ""}`}
          >
            <Ic s={20}>{d}</Ic>
          </button>
        ))}
      </div>
      <div className="mt-1.5 mr-[9px] ml-[7px] flex h-5 gap-1">
        <input aria-label="Object name" defaultValue="Cylinder01" className={`min-w-0 grow text-[11px] ${FIELD}`} />
        <button aria-label="Object color" className={`w-[17px] bg-[#e4ae8a] ${SUNKEN}`} />
      </div>
      <Combo label="Modifier List" value="Modifier List" cls="mt-1.5 mr-2 ml-2 h-[23px]" />
      <StackList />
      <StackTools />
      <div className="mt-[7px] mr-[5px] ml-[5px] h-0.5 bg-black" />
      <Rollouts />
    </aside>
  );
}

/* ---------- status bar ---------- */

const PlayIc = ({ d, w = 16 }: { d: string; w?: number }) => (
  <svg width={w} height="12" viewBox={`0 0 ${w} 12`} fill="#000"><path d={d} /></svg>
);
const NavIc = ({ n, children }: Kids & { n: string }) => (
  <button aria-label={n} className="flex h-[21px] w-[23px] items-center justify-center">
    <svg width="17" height="17" viewBox="0 0 17 17" fill="none" stroke="#26264e">{children}</svg>
  </button>
);
const VBar = () => <span className="h-4 w-px bg-[#888]" />;

function StatusBar() {
  return (
    <footer className="flex h-[50px] shrink-0 items-start bg-[#c4c4c4]">
      <div className="mt-[3px] ml-0.5 flex w-[97px] shrink-0 flex-col gap-0.5">
        <div className={`h-[21px] bg-[#d8c0c0] ${SUNKEN}`} />
        <div className={`h-[22px] bg-white ${SUNKEN}`} />
      </div>
      <span className="ml-[5px] h-full w-[3px] shrink-0 border-r border-l border-r-[#888] border-l-[#e8e8e8]" />
      <div className="flex h-full min-w-0 grow flex-col gap-1 pt-1">
        <div className="flex h-[21px] items-stretch">
          <div className={`flex grow items-center pl-[5px] ${SUNKEN}`}>1 Object Selected</div>
          <button aria-label="Selection lock" className="mx-1 flex w-[18px] items-center justify-center">
            <svg width="9" height="12" viewBox="0 0 9 12" fill="none" stroke="#000"><path d="M2 6V2.500C2 0 7 0 7 2.500V6" strokeWidth="1.300" /><path d="M0 6.500h9M0 8.500h9M0 10.500h9" strokeWidth="1.500" /></svg>
          </button>
          <button aria-label="Absolute mode" className="mr-[3px] flex w-7 items-center justify-center">
            <svg width="15" height="15" viewBox="0 0 15 15" fill="none" stroke="#000"><path d="M.5.5h14v14H.5z" /><path d="M7.500 1v13M1 7.500h13" stroke="#777" /><circle cx="7.500" cy="7.500" r="2" fill="#444" /></svg>
          </button>
          {[["X:", "20,189"], ["Y:", "-1,665"], ["Z:", "0,0"]].map(([n, v]) => (
            <div key={n} className="mr-3 flex w-[70px] items-center">
              <label className="w-3 text-[#333]">{n}</label>
              <input aria-label={n} defaultValue={v} className={`h-[21px] w-[58px] text-[11px] text-[#808080] ${FIELD}`} />
            </div>
          ))}
        </div>
        <div className={`mr-0.5 flex h-[21px] items-center pl-[5px] whitespace-pre ${SUNKEN}`}>{"Rendering Time  0:00:00"}</div>
      </div>
      <div className="flex w-[100px] shrink-0 flex-col gap-1 pt-1">
        <div className={`flex h-[21px] items-center pl-[5px] ${SUNKEN}`}>Grid = 10,0</div>
        <div className={`flex h-[21px] items-center pl-[5px] ${SUNKEN}`}>Add Time Tag</div>
      </div>
      <Push cls="mt-[3px] ml-0.5 h-[44px] w-[43px] shrink-0">
        <svg width="26" height="12" viewBox="0 0 26 12" fill="none" stroke="#000" role="img" aria-label="Set keys"><circle cx="5" cy="6" r="4" strokeWidth="1.800" /><path d="M9 5.500h16M18 6v4M22 6v5" strokeWidth="2.200" /></svg>
      </Push>
      <div className="mt-[3px] ml-1 flex w-[47px] shrink-0 flex-col">
        <Push cls="h-[22px]">Auto Key</Push>
        <Push cls="h-[22px]">Set Key</Push>
      </div>
      <div className="mt-[3px] ml-1 flex w-[116px] shrink-0 flex-col gap-0.5">
        <Combo label="Key selection" value="Selected" cls="h-[21px] w-[114px]" />
        <div className="flex h-[21px] items-center">
          <button aria-label="Default tangents" className="flex w-[26px] justify-center">
            <svg width="18" height="17" viewBox="0 0 18 17" fill="none"><path d="M1 12c3 4 5 0 5-4s1-6 2-2 2 7 3 4 0-8 4-8" stroke="#b03838" strokeWidth="1.500" /><path d="M0 14.500h6M10 1.500h6" stroke="#446" /><path d="M18 13v3h-3z" fill="#fff" /></svg>
          </button>
          <Push cls="h-[21px] grow">Key Filters...</Push>
        </div>
      </div>
      <div className="mt-[3px] ml-[6px] flex w-[125px] shrink-0 flex-col gap-0.5">
        <div className="flex h-[21px] items-center justify-between">
          <button aria-label="Go to start"><PlayIc w={17} d="M0 1h2v10H0zM9 1v10L2 6zM16 1v10L9 6z" /></button>
          <VBar />
          <button aria-label="Previous frame"><PlayIc w={14} d="M6 1v10L0 6zM8 2h2v8H8zM11 2h2v8h-2z" /></button>
          <button aria-label="Play" className="flex h-4 w-4 items-center justify-center border-2 border-black"><PlayIc w={8} d="M1 1v10l7-5z" /></button>
          <button aria-label="Next frame"><PlayIc w={14} d="M7 1v10l7-5zM1 2h2v8H1zM4 2h2v8H4z" /></button>
          <VBar />
          <button aria-label="Go to end"><PlayIc w={17} d="M15 1h2v10h-2zM8 1v10l7-5zM1 1v10l7-5z" /></button>
          <VBar />
        </div>
        <div className="flex h-[22px] items-center justify-between">
          <button aria-label="Key mode"><PlayIc w={16} d="M2 2h1.500v8H2zM8 2v8L4 6zM9 2v8l4-4zM13.500 2H15v8h-1.500z" /></button>
          <VBar />
          <input aria-label="Current frame" defaultValue="0" className={`h-5 w-[62px] text-[12px] ${FIELD}`} />
          <Spinner name="Frame" />
          <button aria-label="Time configuration">
            <svg width="14" height="14" viewBox="0 0 14 14" fill="none" stroke="#802828"><path d="M.5.5h10v11H.5zM0 3h11" /><circle cx="9" cy="9" r="4" fill="#e4d4d4" /><path d="M9 6v3h3" /></svg>
          </button>
          <VBar />
        </div>
      </div>
      <div className="mt-[3px] mr-1 flex w-[92px] shrink-0 flex-wrap">
        <NavIc n="Zoom"><circle cx="6" cy="6" r="4.500" fill="#d8e4ec" /><path d="M9.500 9.500l6 6" strokeWidth="2.500" /></NavIc>
        <NavIc n="Zoom All"><path d="M6.500 1.500h10v10h-10zM11.500 1v10M7 6.500h9" stroke="#883030" /><circle cx="5" cy="9" r="3.500" fill="#dce" /><path d="M7.500 12l4 4" strokeWidth="2" /></NavIc>
        <NavIc n="Zoom Extents"><path d="M1 4V1h3M13 1h3v3M1 13v3h3" stroke="#000" /><path d="M3.500 6.500h8v8h-8zM3.500 6.500l3-3h8l-3 3M14.500 3.500v8l-3 3" fill="#b8c4dc" /></NavIc>
        <NavIc n="Zoom Extents All"><path d="M6.500 1.500h10v9h-10zM11.500 1v9M7 6.500h9" stroke="#883030" /><path d="M1.500 8.500h7v7h-7zM1.500 8.500l2-2h7l-2 2M10.500 6.500v7l-2 2" fill="#c8d0e8" /></NavIc>
        <NavIc n="Region Zoom"><path d="M.5.5h16v16H.5z" stroke="#000" strokeDasharray="2 1" fill="#eee" /><circle cx="8" cy="7" r="4" fill="#d8e4ec" /><path d="M11 10l4 4" strokeWidth="2.500" /></NavIc>
        <NavIc n="Pan"><path d="M5 16l-4-6 1-2 3 2-2-7h2l2 5V1h2l1 6 2-5h2l-1 6 3-3 1 1-3 6-2 4z" fill="#fff" stroke="#222" /></NavIc>
        <NavIc n="Arc Rotate"><circle cx="8" cy="9" r="5" /><path d="M8 1v8l7 2M8 9l-6 6" strokeWidth="1.500" /><path d="M8 0l2 3H6zM17 11l-3 2v-4zM0 17l1-4 3 2z" fill="#26264e" /></NavIc>
        <NavIc n="Min/Max"><path d="M1.500 1.500h10v8h-10zM6 10v5.500h10.500V6H12" fill="#dde2f0" /><path d="M4 4l8 8M4 7V4h3M12 9v3H9" /></NavIc>
      </div>
    </footer>
  );
}

/* ---------- windows chrome ---------- */

const MaxLogo = ({ s = 16 }: { s?: number }) => (
  <svg width={s} height={s} viewBox="0 0 16 16" fill="none" className="shrink-0">
    <rect width="16" height="16" rx="1" fill="#1c62a8" />
    <path d="M13.500 5C11 1 3 1.500 2.500 7.500c0 5 5 6.500 8 5s3.500-5.500 0-6-4 2.500-2 3" stroke="#e4f0fa" strokeWidth="1.900" />
    <path d="M14 7c1 4-3 8-8 7.500" stroke="#7ab4e0" />
  </svg>
);
const FolderIc = () => (
  <svg width="16" height="14" viewBox="0 0 16 14"><path d="M1 2h5l2 2h6v9H1z" fill="#d8a830" /><path d="M3 5h12l-1 8H1z" fill="#fbe68a" stroke="#c89a30" strokeWidth=".7" /></svg>
);
const FoxIc = () => (
  <svg width="16" height="16" viewBox="0 0 16 16" fill="none"><circle cx="8" cy="8" r="7" fill="#e06a18" /><circle cx="8.500" cy="6.500" r="4.500" fill="#2c5cb0" /><path d="M1.500 4C2 11 6 13 10 11c-4 0-5-3-3-5L4 5z" fill="#f8a830" /><path d="M12 2c3 3 3 8 0 11" stroke="#f8c040" strokeWidth="2" /></svg>
);
const FilmIc = () => (
  <svg width="15" height="16" viewBox="0 0 15 16" fill="none"><rect width="15" height="16" fill="#111" /><path d="M1.500 1v14M13.500 1v14" stroke="#888" strokeDasharray="1.500 1.500" /><path d="M3 0h9v16H3z" fill="#f0e030" /><path d="M3 0h9v7z" fill="#28a048" /><path d="M7 0h5v4z" fill="#2858c0" /><path d="M3 6l9 8v2H3z" fill="#f08020" /><path d="M3 11l5 5H3z" fill="#d02020" /></svg>
);

const TASKS: [string, React.ReactNode][] = [
  ["3D Max -Tutoriales", <FolderIc />],
  ["3ds Max Bordes Suav...", <FoxIc />],
  ["plato.max - Autodesk...", <MaxLogo />],
  ["PhotoFiltre Studio", <FilmIc />],
];

function Taskbar() {
  return (
    <nav className={`flex h-[60px] shrink-0 items-stretch border-t border-t-[#222] bg-[linear-gradient(180deg,#6c6c6c_0px,#565656_14px,#3c3c3c_16px,#3b3b3b_46px,#242424_59px)] text-white ${UI}`}>
      <button className="flex h-[30px] w-[104px] shrink-0 items-center gap-1 rounded-r-xl border-r-2 border-r-[#8a3008] bg-[linear-gradient(180deg,#f0946a_0px,#e2713c_6px,#cf5215_16px,#dc5c1a_29px)] pl-[9px] [font-family:'Liberation_Sans',Arial,sans-serif] text-[17px] font-bold italic [text-shadow:1px_1px_1px_#502000]">
        <svg width="21" height="19" viewBox="0 0 21 19"><path d="M4 2c3-2 4-1 6 0L8 8C6 7 5 6 2 8z" fill="#e85020" /><path d="M11 2c3 2 5 1 8 0l-2 6c-3 2-5 1-8 0z" fill="#78c030" /><path d="M2 9c3-2 4-1 6 0l-2 7c-2-2-4-2-6 0z" fill="#4078e0" /><path d="M9 10c3 2 5 1 8 0l-2 6c-3 2-5 1-8 0z" fill="#f8c828" /></svg>
        Inicio
      </button>
      <div className="ml-[9px] flex gap-[3px] pt-1">
        {TASKS.map(([n, ic], i) => (
          <button
            key={n}
            className={`flex h-6 w-[157px] items-center gap-1 overflow-hidden rounded-sm border pl-2 text-[11px] whitespace-nowrap ${
              i === 2
                ? "border-[#0c0c0c] border-b-[#777] bg-linear-to-b from-[#0a0a0a] to-[#2c2c2c]"
                : "border-t-[#6a6a6a] border-l-[#5a5a5a] border-r-[#222] border-b-[#151515] bg-linear-to-b from-[#606060] to-[#383838]"
            }`}
          >
            {ic}
            {n}
          </button>
        ))}
      </div>
      <div className="ml-auto flex w-[139px] shrink-0 border-l border-l-black bg-linear-to-b from-[#3c3c3c] via-[#1c1c1c] to-[#101010] pl-[9px]">
        <div className="grid h-[57px] w-[54px] grid-cols-3 grid-rows-3 items-center">
          <svg width="16" height="16" viewBox="0 0 16 16"><path d="M8 0l6 3c0 6-2 10-6 13C4 13 2 9 2 3z" fill="#f4d420" stroke="#f8f0a0" strokeWidth=".7" /><path d="M8 4v5M8 11v2" stroke="#222" strokeWidth="2" /></svg>
          <svg width="16" height="16" viewBox="0 0 16 16" fill="none"><rect x="1" y="2" width="13" height="13" rx="2" fill="#c41818" /><path d="M3 12c4-2 5-5 4-8 0 4 3 5 6 5-4 0-7 0-10 3z" stroke="#fff" /><circle cx="12" cy="4" r="3" fill="#e8a080" /></svg>
          <svg width="17" height="16" viewBox="0 0 17 16" fill="none"><rect x="1" y="3" width="9" height="7" fill="#28407c" stroke="#b8c4dc" /><path d="M3 13h6M6 10v3" stroke="#b8c4dc" strokeWidth="1.500" /><path d="M11 4c1 1 1 3 0 4M13 2c2 2 2 6 0 8M15 1c3 3 3 7 0 10" stroke="#ccc" /></svg>
          <svg width="16" height="16" viewBox="0 0 16 16" fill="none"><rect x="5" y="1" width="8" height="6" fill="#28407c" stroke="#a8b4d8" /><rect x="1" y="6" width="8" height="6" fill="#28407c" stroke="#a8b4d8" /><path d="M3 14h5" stroke="#a8b4d8" strokeWidth="1.500" /><path d="M9 9l6 6M15 9l-6 6" stroke="#e02020" strokeWidth="2.200" /></svg>
          <svg width="16" height="16" viewBox="0 0 16 16" fill="none"><circle cx="7" cy="7" r="5.500" fill="#8a8a8a" stroke="#ccc" /><circle cx="6" cy="6" r="2.500" fill="#333" /><path d="M10 15l5-5M12 16l3-3" stroke="#7078b8" strokeWidth="1.500" /></svg>
          <svg width="16" height="16" viewBox="0 0 16 16" fill="none"><path d="M1 2c2 6 4 8 9 11" stroke="#e0f0f0" strokeWidth="2" /><path d="M6 10l2-4 1 3 4-9-1 9 2-1-2 5z" fill="#30c4c4" /><path d="M10 14h5" stroke="#c8d830" strokeWidth="2" /></svg>
          <svg width="16" height="16" viewBox="0 0 16 16" fill="none"><rect width="16" height="16" rx="2" fill="#d41820" /><path d="M2 9c1-8 11-8 12 0-2-2-3-2-4 0-1-2-3-2-4 0-1-2-3-1-4 0z" fill="#fff" /><path d="M9 9l-2 5-2-1" stroke="#fff" strokeWidth="1.300" /></svg>
        </div>
        <div className="flex h-[57px] grow flex-col items-center justify-around pr-2.5 text-[11px] whitespace-nowrap">
          <span>03:21 p.m.</span>
          <span>Domingo</span>
          <span>15/04/2012</span>
        </div>
      </div>
    </nav>
  );
}

const MENUS = ["File", "Edit", "Tools", "Group", "Views", "Create", "Modifiers", "Character", "reactor", "Animation", "Graph Editors", "Rendering", "Customize", "MAXScript", "Help"];

export default function App() {
  const winBtn = "flex h-5 w-5 items-center justify-center rounded-sm border border-[#8a8a8a] bg-linear-to-b from-[#6a6a6a] to-[#2c2c2c]";
  return (
    <div className={`flex min-h-screen flex-col bg-[#c4c4c4] text-[11px] leading-[14px] text-black ${PANEL}`}>
      <header className={`flex h-[26px] shrink-0 items-center border-t border-t-[#222] bg-[linear-gradient(180deg,#6c6c6c_0px,#565656_10px,#3e3e3e_12px,#222_25px)] pr-0.5 pl-0.5 ${TITLE}`}>
        <MaxLogo />
        <h1 className="ml-1 text-[11px] font-bold whitespace-pre text-white">{"plato.max - Autodesk 3ds Max 8  - Stand-alone License"}</h1>
        <div className="ml-auto flex gap-[3px]">
          <button aria-label="Minimize" className={winBtn}><svg width="12" height="12" viewBox="0 0 12 12"><path d="M2 9h6" stroke="#fff" strokeWidth="3" /></svg></button>
          <button aria-label="Restore" className={winBtn}><svg width="12" height="12" viewBox="0 0 12 12" fill="none" stroke="#fff"><path d="M4 4V1.500h6.500v6H8M1.500 5.500h6v5h-6zM1 5h7M4 2h7" /></svg></button>
          <button aria-label="Close" className="flex h-5 w-5 items-center justify-center rounded-sm border border-[#f0b0a0] bg-linear-to-b from-[#ee8a72] to-[#d8391c]"><CloseX /></button>
        </div>
      </header>
      <nav aria-label="Main menu" className={`flex h-5 shrink-0 items-center border-b border-b-white bg-[#dcdcdc] ${UI}`}>
        {MENUS.map((m) => (<button key={m} className="pr-[5px] pl-[5px] whitespace-nowrap first:pr-1.5">{m}</button>))}
      </nav>
      <div className="flex h-[39px] shrink-0">
        <div role="toolbar" aria-label="Main toolbar" className="flex items-start border-r border-r-[#777] border-b border-b-[#999] pt-1 pr-1">
          <span className="mr-0.5 ml-0.5 h-8 w-1 shrink-0 border-r border-l border-[#999]" />
          <Tool name="Undo" /><Tool name="Redo" /><Sep />
          <Tool name="Link" /><Tool name="Unlink" /><Tool name="Bind" /><Sep />
          <Combo label="Selection filter" value="All" cls="h-[21px] w-[70px]" />
          <Tool name="Select" /><Tool name="Select by Name" /><Tool name="Region" /><Tool name="Crossing" /><Sep />
          <Tool name="Move" on /><Tool name="Rotate" /><Tool name="Scale" />
          <Combo label="Reference coordinates" value="View" cls="h-[21px] w-[70px]" />
          <Tool name="Pivot" /><Sep /><Tool name="Manipulate" /><Sep />
          <Tool name="Snap 3" /><Tool name="Angle Snap" /><Tool name="Percent Snap" /><Tool name="Spinner Snap" /><Sep />
          <Tool name="Named Sets" />
          <Combo label="Named selection" value="" cls="h-[21px] w-[120px]" />
          <Sep /><Tool name="Mirror" /><Tool name="Align" /><Sep /><Tool name="Layers" /><Sep />
          <Tool name="Curve Editor" /><Tool name="Schematic" /><Sep /><Tool name="Materials" /><Sep />
          <Tool name="Render Scene" />
          <Combo label="Render view" value="View" cls="h-[21px] w-20" />
          <Tool name="Quick Render" />
        </div>
      </div>
      <main className="flex grow">
        <ReactorBar />
        <div className="ml-px flex min-w-0 grow flex-col">
          <div className="relative min-h-0 grow border-2 border-[#f4ec30]">
            <div className="absolute inset-0"><Viewport /></div>
            <ConnectDialog />
          </div>
          <TimeSlider />
          <TrackBar />
        </div>
        <CommandPanel />
      </main>
      <StatusBar />
      <Taskbar />
    </div>
  );
}
